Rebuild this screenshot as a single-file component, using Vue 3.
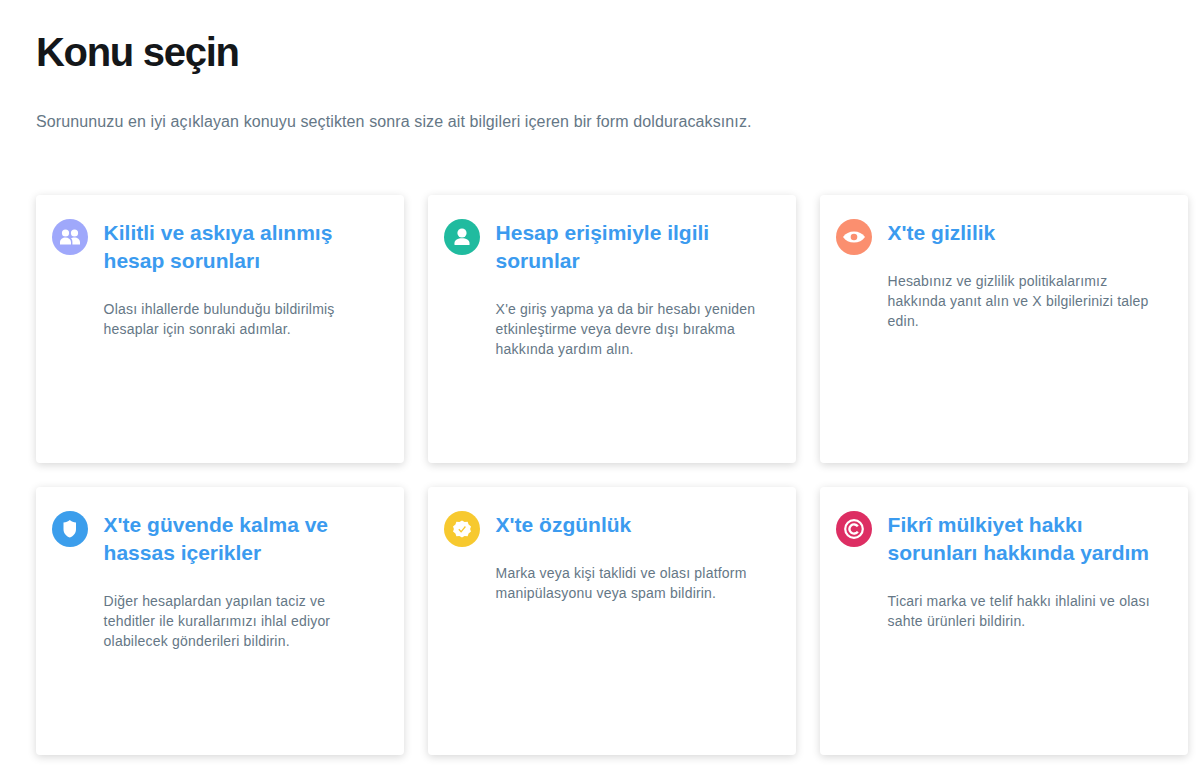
<template>
  <main class="page">
    <h1>Konu seçin</h1>
    <p class="intro">Sorununuzu en iyi açıklayan konuyu seçtikten sonra size ait bilgileri içeren bir form dolduracaksınız.</p>
    <section class="cards">
      <article v-for="card in cards" :key="card.title" class="card">
        <div class="icon" :style="{ background: card.color }">
          <svg width="36" height="36" viewBox="0 0 36 36">
            <g v-if="card.icon === 'group'" fill="#fff">
              <circle cx="13.5" cy="14" r="3.6" />
              <circle cx="22.5" cy="14" r="3.6" />
              <path d="M8 25.5v-2.2c0-3 2.6-4.8 5.5-4.8 2.8 0 5.2 1.6 5.5 4.4v2.6z" />
              <path d="M20.4 18.7c.7-.2 1.4-.2 2.1-.2 2.9 0 5.5 1.8 5.5 4.8v2.2h-7.6v-2.6c0-1.6-.4-3-1.4-3.7z" />
            </g>
            <g v-else-if="card.icon === 'user'" fill="#fff">
              <circle cx="18" cy="14" r="4.6" />
              <path d="M10.5 26v-1.8c0-3.4 3.4-5 7.5-5s7.5 1.6 7.5 5V26z" />
            </g>
            <g v-else-if="card.icon === 'eye'">
              <path d="M7 18c2.6-3.8 6.400-5.600 11-5.600s8.400 1.800 11 5.600c-2.600 3.800-6.400 5.600-11 5.600S9.600 21.800 7 18z" fill="#fff" />
              <circle cx="18" cy="18" r="3.300" fill="#fb8f6f" />
            </g>
            <path v-else-if="card.icon === 'shield'" d="M17.800 9c1.600 1.400 3.800 2.300 6.200 2.500v6.700c0 4-2.400 6.700-6.200 8.300-3.800-1.600-6.300-4.300-6.300-8.300v-6.700c2.400-.2 4.700-1.100 6.300-2.500z" fill="#fff" />
            <g v-else-if="card.icon === 'badge'">
              <path d="M18 9.500l2.600 1.500 3-.2 1 2.800 2.400 1.800-.9 2.600.9 2.600-2.400 1.800-1 2.800-3-.2-2.600 1.500-2.600-1.500-3 .2-1-2.800-2.400-1.800.9-2.600-.9-2.600 2.400-1.800 1-2.800 3 .2z" fill="#fff" />
              <path d="M14.800 18.300l2.300 2.500 4.300-5.300" fill="none" stroke="#f7c92f" stroke-width="1.300" />
            </g>
            <g v-else fill="none" stroke="#fff">
              <circle cx="18" cy="18" r="8.800" stroke-width="2.200" />
              <path d="M21.800 15.400a4.600 4.600 0 1 0 0 5.200" stroke-width="2.400" />
            </g>
          </svg>
        </div>
        <div class="body">
          <h2>{{ card.title }}</h2>
          <p>{{ card.text }}</p>
        </div>
      </article>
    </section>
  </main>
</template>

<script setup>
const cards = [
  {
    icon: 'group',
    color: '#9fa8fb',
    title: 'Kilitli ve askıya alınmış hesap sorunları',
    text: 'Olası ihlallerde bulunduğu bildirilmiş hesaplar için sonraki adımlar.',
  },
  {
    icon: 'user',
    color: '#20bb9f',
    title: 'Hesap erişimiyle ilgili sorunlar',
    text: "X'e giriş yapma ya da bir hesabı yeniden etkinleştirme veya devre dışı bırakma hakkında yardım alın.",
  },
  {
    icon: 'eye',
    color: '#fb8f6f',
    title: "X'te gizlilik",
    text: 'Hesabınız ve gizlilik politikalarımız hakkında yanıt alın ve X bilgilerinizi talep edin.',
  },
  {
    icon: 'shield',
    color: '#3c9eec',
    title: "X'te güvende kalma ve hassas içerikler",
    text: 'Diğer hesaplardan yapılan taciz ve tehditler ile kurallarımızı ihlal ediyor olabilecek gönderileri bildirin.',
  },
  {
    icon: 'badge',
    color: '#f7c92f',
    title: "X'te özgünlük",
    text: 'Marka veya kişi taklidi ve olası platform manipülasyonu veya spam bildirin.',
  },
  {
    icon: 'copyright',
    color: '#dd2e63',
    title: 'Fikrî mülkiyet hakkı sorunları hakkında yardım',
    text: 'Ticari marka ve telif hakkı ihlalini ve olası sahte ürünleri bildirin.',
  },
]
</script>

<style>
html,
body {
  margin: 0;
  background: #fff;
  overflow: hidden;
}
</style>

<style scoped>
.page {
  padding: 26px 13px 11px 36px;
  font-family: "Liberation Sans", Arial, sans-serif;
}

h1 {
  margin: 0;
  font-size: 40px;
  line-height: 52px;
  font-weight: 700;
  letter-spacing: -1.3px;
  color: #14171a;
}

.intro {
  margin: 34px 0 0;
  font-size: 16px;
  line-height: 20px;
  letter-spacing: 0.11px;
  color: #657786;
}

.cards {
  display: grid;
  grid-template-columns: repeat(3, 368px);
  grid-auto-rows: 268px;
  gap: 24px;
  margin-top: 63px;
}

.card {
  display: flex;
  gap: 15.6px;
  padding: 24px 16px;
  background: #fff;
  border-radius: 4px;
  box-shadow: 0 2px 8px rgba(0, 0, 0, 0.16);
}

.icon {
  flex: none;
  width: 36px;
  height: 36px;
  border-radius: 50%;
}

.icon svg {
  display: block;
}

.body {
  min-width: 0;
}

h2 {
  margin: 0 0 24px;
  font-size: 21px;
  line-height: 28px;
  font-weight: 700;
  color: #3b9bef;
}

.body p {
  margin: 0;
  padding-right: 12px;
  font-size: 14px;
  line-height: 20px;
  letter-spacing: 0.2px;
  color: #657786;
}
</style>
